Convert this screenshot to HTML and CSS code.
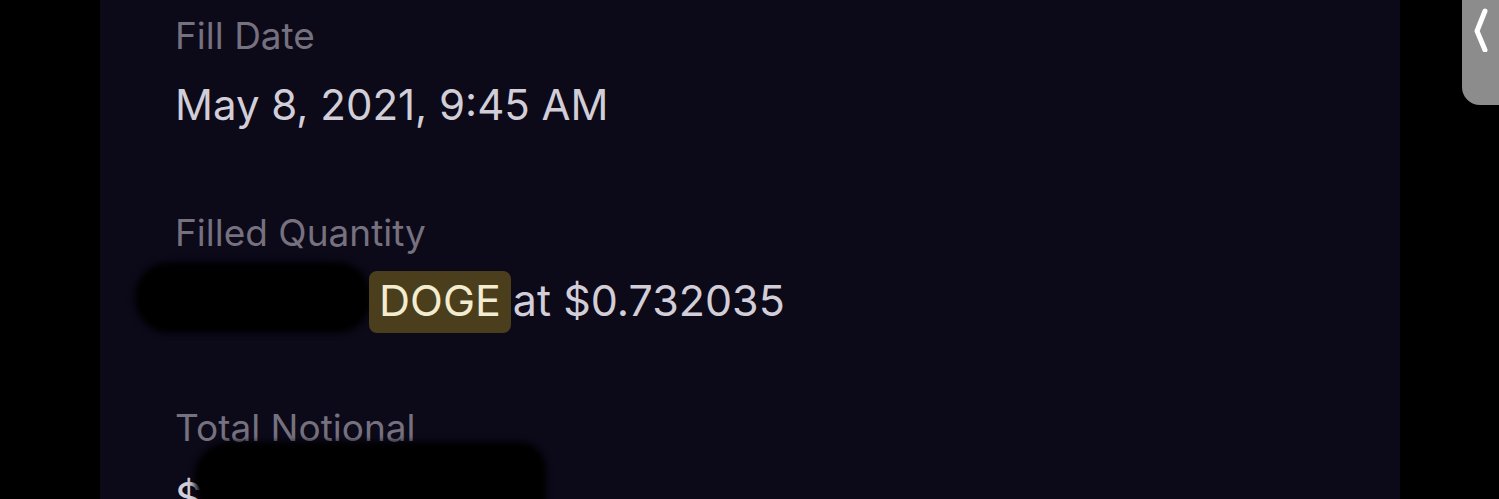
FILE: index.html
```html
<!DOCTYPE html>
<html>
<head>
<meta charset="utf-8">
<link rel="stylesheet" href="styles.css">
</head>
<body>
<div class="screen">
  <div class="panel">
    <div class="field">
      <div class="label">Fill Date</div>
      <div class="value date">May 8, 2021, 9:45 AM</div>
    </div>
    <div class="field">
      <div class="label">Filled Quantity</div>
      <div class="value qty"><span class="redact r1"></span><span class="pill">DOGE</span><span class="price">at $0.732035</span></div>
    </div>
    <div class="field">
      <div class="label">Total Notional</div>
      <div class="value total"><span>$</span><span class="redact r2"></span></div>
    </div>
  </div>
  <div class="tab">
    <svg width="20" height="50" viewBox="0 0 20 50"><path d="M14 9 L6 29 L14 48" fill="none" stroke="#fff" stroke-width="5" stroke-linecap="round" stroke-linejoin="round"/></svg>
  </div>
</div>
</body>
</html>
```
FILE: styles.css
```css
html, body { margin: 0; padding: 0; background: #000; }
.screen { position: relative; width: 1499px; height: 499px; overflow: hidden; background: #000; font-family: Inter, "Liberation Sans", sans-serif; }
.panel { margin-left: 100px; width: 1300px; height: 499px; background: #0c0919; box-sizing: border-box; padding: 14px 0 0 75px; display: flex; flex-direction: column; gap: 80px; }
.field { display: flex; flex-direction: column; gap: 21px; }
.label { font-size: 37px; line-height: 44px; color: #76717f; }
.value { font-size: 43px; line-height: 52px; color: #d2ced8; white-space: nowrap; }
.date { font-size: 42px; }
.qty { display: flex; align-items: center; height: 71px; margin: -14px 0 -7px; }
.redact { display: block; background: #000; border-radius: 34px; filter: blur(3px); flex: none; }
.r1 { width: 236px; height: 71px; margin-left: -40px; margin-right: -2px; }
.pill { display: block; background: #4a3e1d; color: #f3ecce; border-radius: 8px; padding: 8px 10px 12px 10px; line-height: 42px; margin-top: 8px; position: relative; z-index: 1; }
.price { margin-top: 4px; margin-left: 2px; }
.total { display: flex; align-items: flex-start; }
.r2 { width: 352px; height: 80px; margin-left: -9px; margin-top: -29px; border-radius: 40px 30px 0 50px; }
.tab { position: absolute; right: 0; top: 0; width: 37px; height: 105px; background: #8c8c8c; border-bottom-left-radius: 18px; }
.tab svg { position: absolute; left: 9px; top: 2px; }
```
